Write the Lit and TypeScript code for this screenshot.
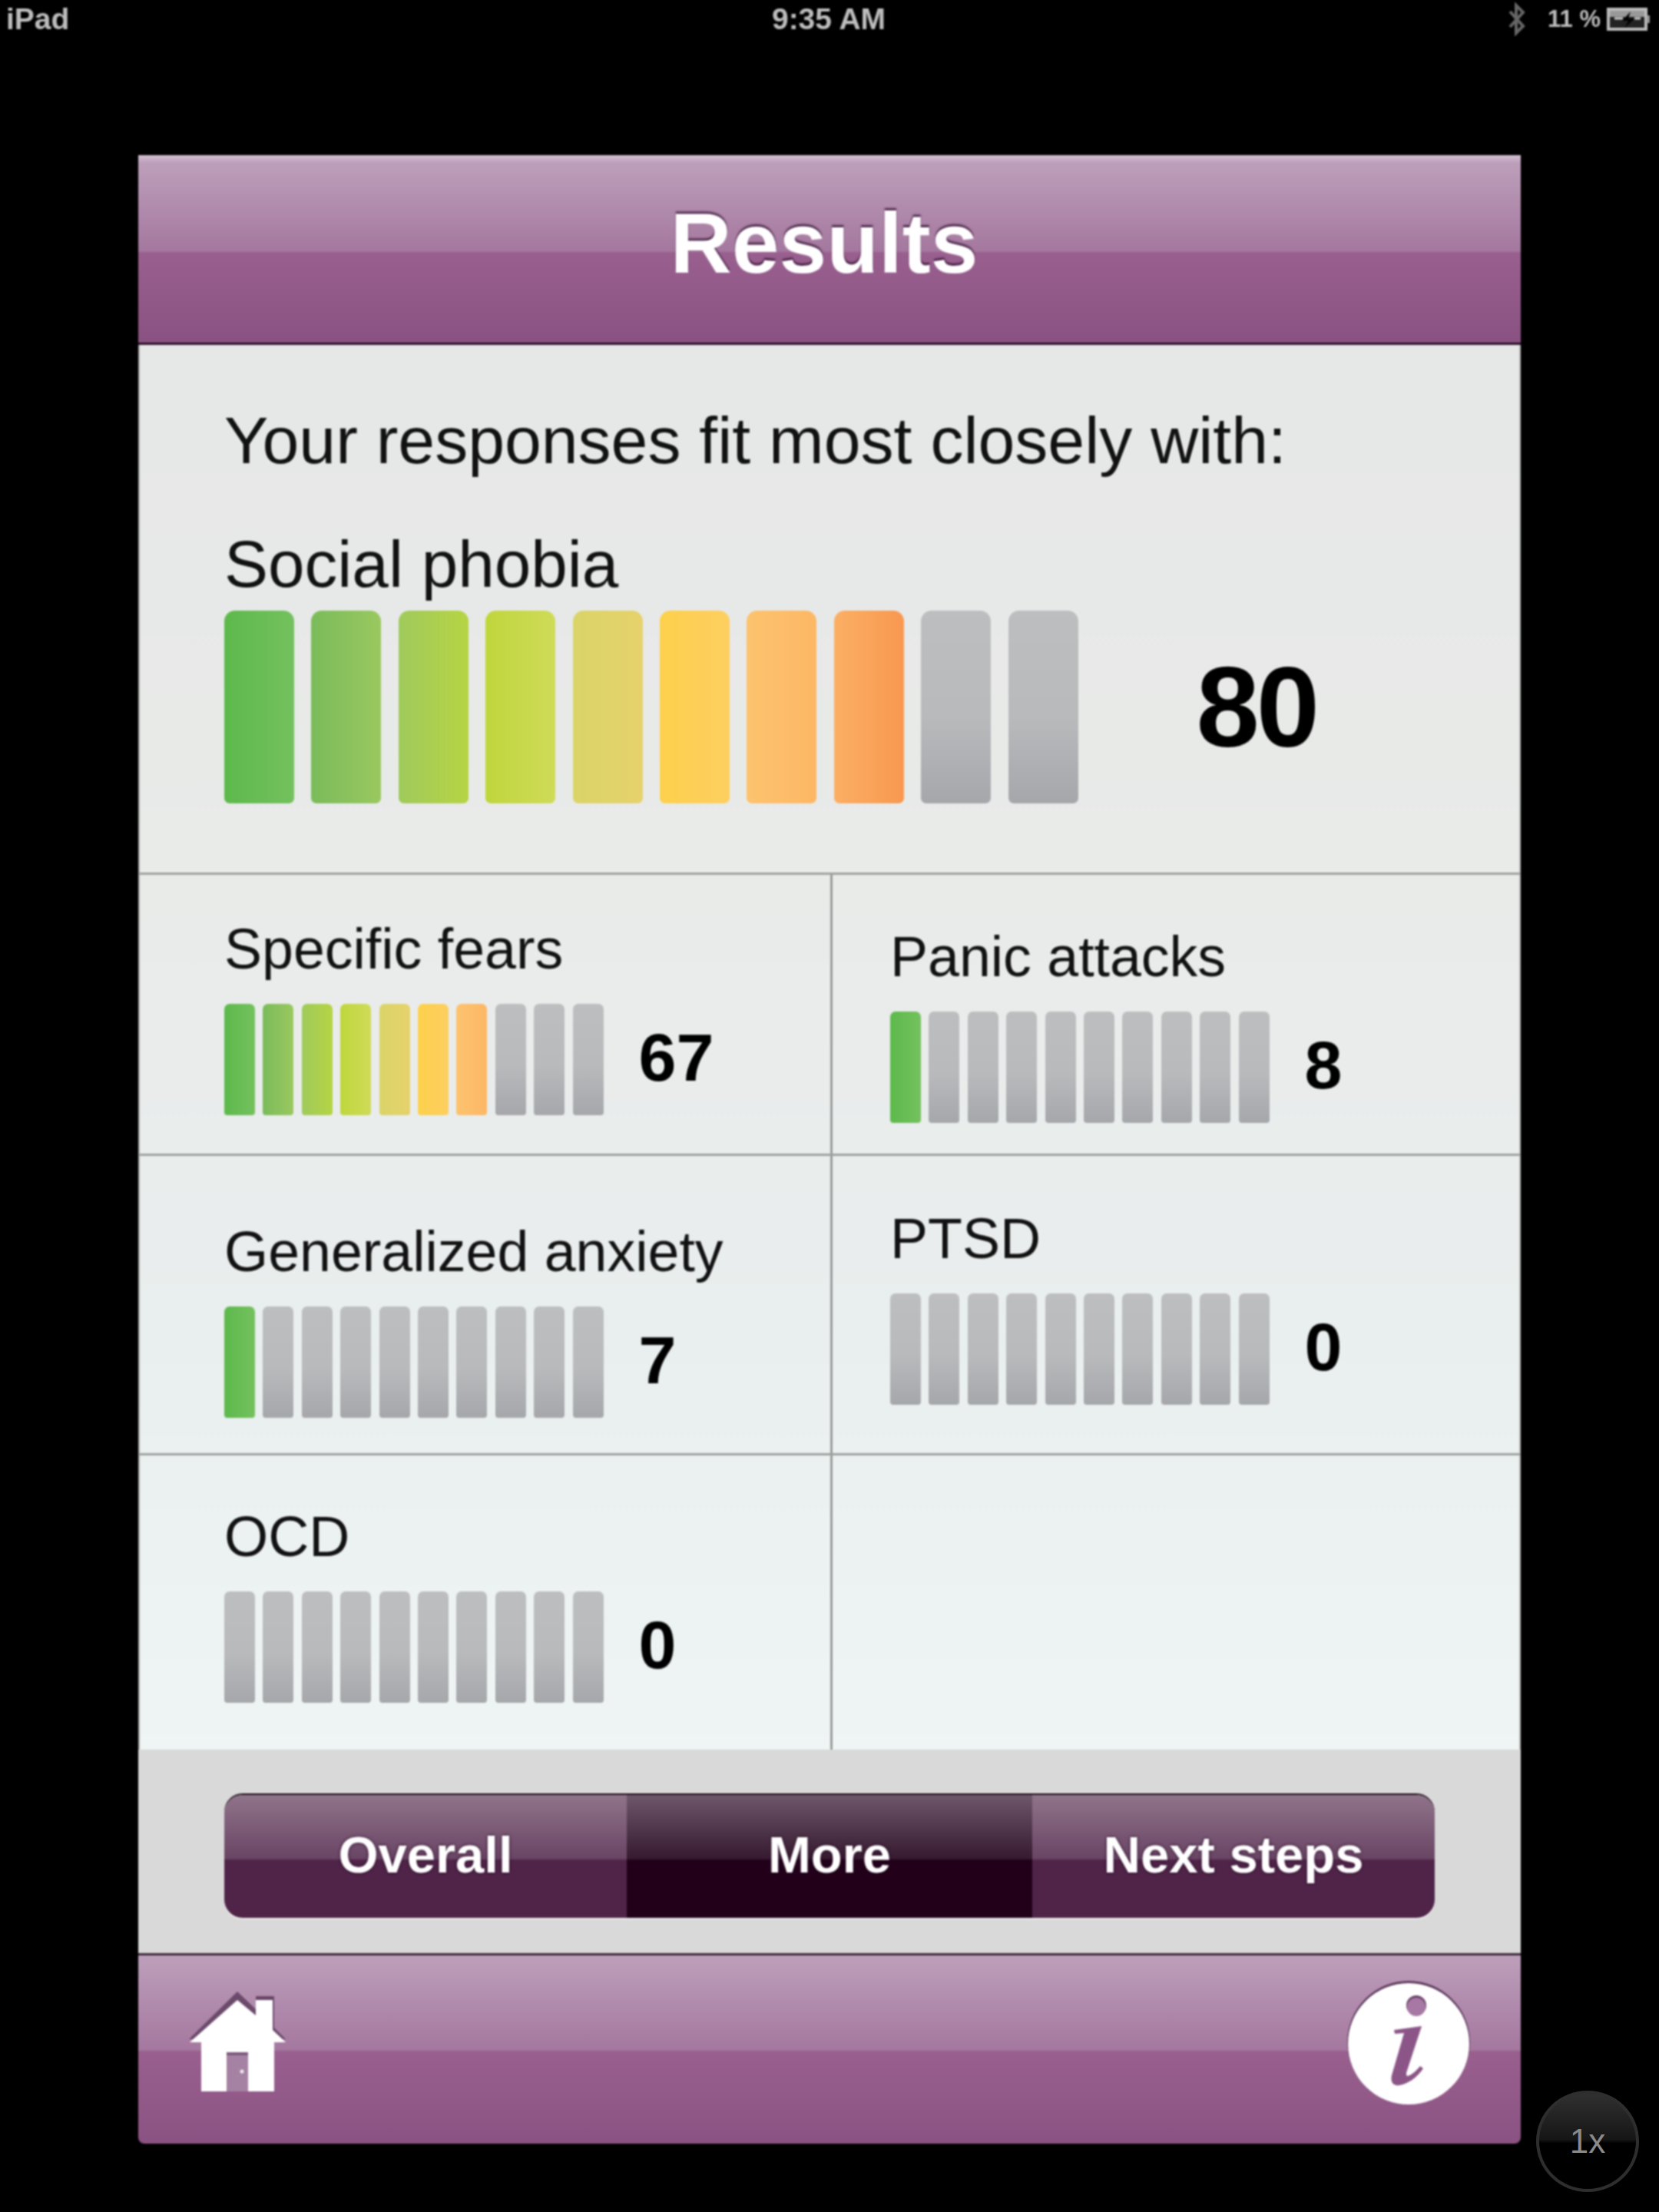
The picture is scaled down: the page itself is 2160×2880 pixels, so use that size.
import { LitElement, css, html, svg } from 'lit'
import { customElement, property } from 'lit/decorators.js'

// left and right stops of each lit segment, green to orange
const SEGMENTS = [
  ['#5db94c', '#74c15e'],
  ['#7abb5b', '#9ac85f'],
  ['#9fca5c', '#b6d443'],
  ['#bfd63c', '#cfdb58'],
  ['#dad468', '#e6d26c'],
  ['#fdd04c', '#fdcf60'],
  ['#fdc36e', '#fdb765'],
  ['#fbaf64', '#f99850'],
]

@customElement('score-bars')
export class ScoreBars extends LitElement {
  @property({ type: Number }) value = 0;
  @property({ type: Boolean, reflect: true }) large = false;

  static styles = css`
    :host {
      display: flex;
      gap: 10.4px;
      height: 145px;
    }
    :host([large]) {
      gap: 22.4px;
      height: 251px;
    }
    .seg {
      width: 40px;
      height: 100%;
      border-radius: 7px 7px 4px 4px;
      background: linear-gradient(180deg, #bdbec0 0%, #b9babc 55%, #a6a7ab 100%);
    }
    :host([large]) .seg {
      width: 91px;
      border-radius: 14px 14px 7px 7px;
    }
  `;

  render() {
    const lit = Math.ceil(this.value / 10);
    return Array.from({ length: 10 }, (_, i) => {
      const c = i < lit ? SEGMENTS[i] : null;
      return c
        ? html`<div class="seg" style="background:linear-gradient(90deg,${c[0]},${c[1]})"></div>`
        : html`<div class="seg"></div>`;
    });
  }
}

const CELLS = [
  { label: 'Specific fears', value: 67, top: 52 },
  { label: 'Panic attacks', value: 8, top: 62 },
  { label: 'Generalized anxiety', value: 7, top: 80 },
  { label: 'PTSD', value: 0, top: 63 },
  { label: 'OCD', value: 0, top: 61 },
]

const homeIcon = svg`
  <path d="M89 33 26 95 152 95 137 80V39H113V56z" fill="#6b4a6b"/>
  <path d="M113 39h22v5h-22z" fill="#6a4566"/>
  <path d="M27 99 89 44 113 64V44h22V83l17 16H137v64H42V99z" fill="#fff"/>
  <path d="M75 112h28v51H75z" fill="#a581a3"/>
  <path d="M75 112h28v4H75z" fill="#7e5a7c"/>
  <circle cx="95" cy="137" r="2.5" fill="#eee"/>
`

const infoIcon = svg`
  <circle cx="90" cy="89" r="80" fill="#5e3a5d"/>
  <circle cx="90" cy="91" r="79" fill="#fff"/>
  <circle cx="100" cy="41" r="13" fill="#6a4268"/>
  <circle cx="100" cy="43" r="12" fill="#a678a3"/>
  <path d="M107 68 71 73l1 5 12-1-16 55c-2 9 2 14 10 13 12-2 24-11 31-22l-4-3c-5 6-10 11-16 13-2 0-2-2-2-4z" fill="#8b5687"/>
`

@customElement('app-root')
export class AppRoot extends LitElement {
  static styles = css`
    :host {
      display: block;
      position: relative;
      width: 2160px;
      height: 2880px;
      background: #000;
      font-family: "Liberation Sans", Arial, sans-serif;
      overflow: hidden;
    }
    .status {
      display: grid;
      grid-template-columns: 1fr auto 1fr;
      align-items: center;
      height: 50px;
      padding: 0 10px 0 8px;
      color: #bdbdbd;
      font-size: 39px;
      font-weight: 700;
      filter: blur(0.8px);
    }
    .status-right {
      display: flex;
      justify-content: flex-end;
      align-items: center;
      gap: 8px;
    }
    .status-right .bt {
      margin-right: 20px;
    }
    .status-pct {
      font-size: 31px;
    }
    .panel {
      width: 1800px;
      margin: 152px 0 0 180px;
      border-radius: 0 0 8px 8px;
      overflow: hidden;
      filter: blur(1px);
    }
    .bar {
      background: linear-gradient(180deg, #d4c2d3 0, #bd9fbb 10px, #a5789f 125px, #99608f 127px, #8a5282 243px);
      border-bottom: 3px solid #2d1129;
    }
    .title {
      height: 247px;
      margin: 0;
      padding: 52px 14px 0 0;
      box-sizing: border-box;
      color: #fff;
      font-size: 111px;
      font-weight: 700;
      line-height: 126px;
      text-align: center;
      text-shadow: 0 -3px 2px rgba(50, 15, 50, 0.75);
    }
    .body {
      background: linear-gradient(180deg, #e6e7e7 0, #e9ebe9 650px, #e9eeee 1250px, #eff4f4 1830px);
      box-shadow: inset 2px 0 #a9aba9, inset -2px 0 #b9bbb9;
    }
    .overall {
      height: 690px;
      box-sizing: border-box;
      padding: 74px 0 0 112px;
      border-bottom: 3px solid #a0a3a0;
    }
    .lead {
      margin: 0 0 62px;
      color: #111;
      font-size: 86px;
      line-height: 100px;
    }
    .overall-label {
      margin-bottom: 10px;
      color: #111;
      font-size: 85.5px;
      line-height: 100px;
    }
    .meter {
      display: flex;
      align-items: center;
    }
    .overall-value {
      margin-left: 154px;
      color: #000;
      font-size: 148px;
      font-weight: 700;
      letter-spacing: -4px;
    }
    .grid {
      display: grid;
      grid-template-columns: 904px 896px;
      grid-template-rows: 366px 390px 383px;
    }
    .cell {
      box-sizing: border-box;
      padding-left: 112px;
      border-bottom: 3px solid #a0a3a0;
    }
    .cell:nth-child(odd) {
      border-right: 3px solid #999c9a;
    }
    .cell:nth-child(even) {
      padding-left: 75px;
    }
    .cell:nth-last-child(-n + 2) {
      border-bottom: none;
    }
    .cell-label {
      margin-bottom: 26px;
      color: #111;
      font-size: 73.5px;
      line-height: 90px;
      white-space: nowrap;
    }
    .cell-value {
      margin: 0 0 6px 46px;
      color: #000;
      font-size: 88px;
      font-weight: 700;
    }
    .tools {
      display: flex;
      height: 265px;
      box-sizing: border-box;
      padding: 59px 112px 0;
      background: #d9d9d9;
    }
    .segmented {
      display: grid;
      grid-template-columns: 524px 528px 524px;
      width: 1576px;
      height: 160px;
      border-radius: 24px;
      box-shadow: 0 -2px 0 #1d0a1a, 0 2px 1px #efefef;
      overflow: hidden;
    }
    .seg-btn {
      display: flex;
      align-items: center;
      justify-content: center;
      padding-bottom: 6px;
      color: #fff;
      font-size: 67px;
      font-weight: 700;
      background: linear-gradient(180deg, #90748a 0, #6a4565 83px, #4f2448 85px, #4f2448 100%);
      text-shadow: 0 0 4px rgba(30, 0, 30, 0.8);
    }
    .seg-btn.on {
      background: linear-gradient(180deg, #6e576b 0, #361a30 83px, #22001a 85px, #22001a 100%);
    }
    .foot {
      display: flex;
      justify-content: space-between;
      height: 248px;
      box-sizing: border-box;
      padding: 14px 56px 0 40px;
      background: linear-gradient(180deg, #bd9fbb 0, #a5789f 123px, #99608f 125px, #8a5282 248px);
      border-top: 3px solid #3d2a3b;
    }
    .foot svg {
      display: block;
    }
    .info {
      margin-top: 10px;
    }
    .speed {
      position: absolute;
      left: 2000px;
      top: 2722px;
      display: flex;
      align-items: center;
      justify-content: center;
      width: 134px;
      height: 132px;
      box-sizing: border-box;
      border: 4px solid #2e2e2e;
      border-radius: 50%;
      background: linear-gradient(180deg, #303030 0, #161616 48%, #000 52%);
      color: #8a8a8a;
      font-size: 44px;
    }
  `;

  renderCell(c: { label: string; value: number; top: number }) {
    return html`
      <div class="cell" style="padding-top:${c.top}px">
        <div class="cell-label">${c.label}</div>
        <div class="meter">
          <score-bars .value=${c.value}></score-bars>
          <span class="cell-value">${c.value}</span>
        </div>
      </div>
    `;
  }

  render() {
    return html`
      <div class="status">
        <span>iPad</span>
        <span>9:35 AM</span>
        <div class="status-right">
          <svg class="bt" width="24" height="44" viewBox="0 0 24 44">
            <path d="M3 12 20 31 11 40V4l9 9L3 32" fill="none" stroke="#666" stroke-width="4"/>
          </svg>
          <span class="status-pct">11 %</span>
          <svg width="58" height="30" viewBox="0 0 58 30">
            <rect x="2" y="2" width="49" height="26" fill="#222" stroke="#bbb" stroke-width="4"/>
            <path d="M4 4h45v8H4z" fill="#999"/>
            <path d="M52 10h4v10h-4z" fill="#999"/>
            <path d="M31 5 20 17h8l-4 9 12-12h-8z" fill="#000"/>
            <path d="M10 14h11M36 14h8" stroke="#ccc" stroke-width="3"/>
          </svg>
        </div>
      </div>

      <div class="panel">
        <h1 class="bar title">Results</h1>

        <div class="body">
          <section class="overall">
            <p class="lead">Your responses fit most closely with:</p>
            <div class="overall-label">Social phobia</div>
            <div class="meter">
              <score-bars large .value=${80}></score-bars>
              <span class="overall-value">80</span>
            </div>
          </section>

          <div class="grid">
            ${CELLS.map((c) => this.renderCell(c))}
            <div class="cell"></div>
          </div>
        </div>

        <div class="tools">
          <div class="segmented">
            <div class="seg-btn">Overall</div>
            <div class="seg-btn on">More</div>
            <div class="seg-btn">Next steps</div>
          </div>
        </div>

        <div class="foot">
          <svg width="200" height="200" viewBox="0 0 200 200">${homeIcon}</svg>
          <svg class="info" width="180" height="180" viewBox="0 0 180 180">${infoIcon}</svg>
        </div>
      </div>

      <div class="speed">1x</div>
    `;
  }
}

declare global {
  interface HTMLElementTagNameMap {
    'app-root': AppRoot;
    'score-bars': ScoreBars;
  }
}
